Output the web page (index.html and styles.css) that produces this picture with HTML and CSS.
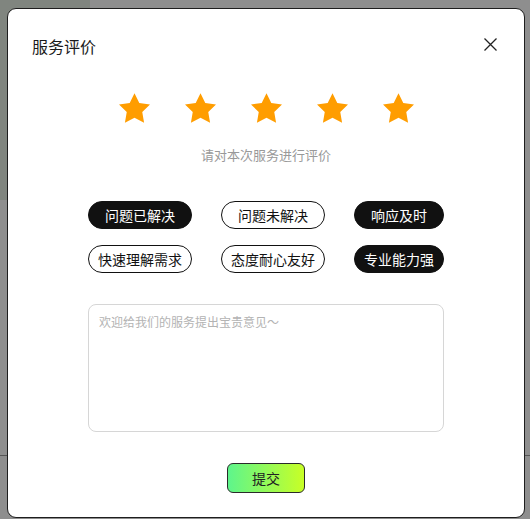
FILE: index.html
```html
<!DOCTYPE html>
<html lang="zh">
<head>
<meta charset="utf-8">
<title>服务评价</title>
<link rel="stylesheet" href="styles.css">
</head>
<body>
<div class="backdrop">
  <div class="side"></div>
  <div class="line"></div>
  <div class="modal">
    <div class="header">
      <h2 class="title">服务评价</h2>
      <svg class="close" width="13" height="13" viewBox="0 0 13 13"><path d="M0.5 0.5 L12.5 12.5 M12.5 0.5 L0.5 12.5" stroke="#222" stroke-width="1.3" fill="none"/></svg>
    </div>
    <div class="stars">
      <svg class="star" viewBox="2 2 20 19.1"><polygon points="12,2 15.09,8.26 22,9.27 17,14.14 18.18,21.02 12,17.77 5.82,21.02 7,14.14 2,9.27 8.91,8.26"/></svg>
      <svg class="star" viewBox="2 2 20 19.1"><polygon points="12,2 15.09,8.26 22,9.27 17,14.14 18.18,21.02 12,17.77 5.82,21.02 7,14.14 2,9.27 8.91,8.26"/></svg>
      <svg class="star" viewBox="2 2 20 19.1"><polygon points="12,2 15.09,8.26 22,9.27 17,14.14 18.18,21.02 12,17.77 5.82,21.02 7,14.14 2,9.27 8.91,8.26"/></svg>
      <svg class="star" viewBox="2 2 20 19.1"><polygon points="12,2 15.09,8.26 22,9.27 17,14.14 18.18,21.02 12,17.77 5.82,21.02 7,14.14 2,9.27 8.91,8.26"/></svg>
      <svg class="star" viewBox="2 2 20 19.1"><polygon points="12,2 15.09,8.26 22,9.27 17,14.14 18.18,21.02 12,17.77 5.82,21.02 7,14.14 2,9.27 8.91,8.26"/></svg>
    </div>
    <p class="hint">请对本次服务进行评价</p>
    <div class="tags">
      <span class="tag on">问题已解决</span>
      <span class="tag">问题未解决</span>
      <span class="tag on">响应及时</span>
      <span class="tag">快速理解需求</span>
      <span class="tag">态度耐心友好</span>
      <span class="tag on">专业能力强</span>
    </div>
    <textarea class="comment" placeholder="欢迎给我们的服务提出宝贵意见～"></textarea>
    <div class="actions">
      <button class="submit">提交</button>
    </div>
  </div>
</div>
</body>
</html>
```

FILE: styles.css
```css
* { box-sizing: border-box; }
html, body {
  margin: 0;
  padding: 0;
  width: 530px;
  height: 519px;
  overflow: hidden;
  background: #8e8e8e;
  font-family: "Noto Sans CJK SC", "Noto Sans", sans-serif;
}
.backdrop {
  position: relative;
  width: 530px;
  height: 519px;
  padding: 8px 0 0 7px;
}
.side {
  position: absolute;
  left: 0;
  top: 0;
  width: 90px;
  height: 200px;
  background: #80857f;
}
.line {
  position: absolute;
  left: 0;
  right: 0;
  top: 455px;
  height: 1px;
  background: #555;
}
.modal {
  position: relative;
  width: 518px;
  height: 510px;
  background: #fff;
  border: 1px solid #1e1e1e;
  border-radius: 9px;
  padding: 25px 27px 0 24px;
  display: flex;
  flex-direction: column;
  align-items: center;
}
.header {
  width: 100%;
  display: flex;
  justify-content: space-between;
  align-items: center;
  height: 24px;
}
.title {
  margin: 0;
  font-size: 16px;
  font-weight: 400;
  color: #1a1a1a;
  line-height: 24px;
}
.close { display: block; margin-top: -4px; }
.stars {
  margin-top: 35px;
  display: flex;
  gap: 35px;
  margin-left: 3px;
}
.star {
  width: 31px;
  height: 30px;
  display: block;
  fill: #ff9d00;
}
.hint {
  margin: 23px 0 0 3px;
  font-size: 13px;
  line-height: 18px;
  color: #999;
}
.tags {
  margin-top: 37px;
  width: 356px;
  margin-left: 3px;
  display: grid;
  grid-template-columns: auto auto auto;
  justify-content: space-between;
  row-gap: 16px;
}
.tag {
  height: 28px;
  padding: 0 9px;
  border: 1px solid #111;
  border-radius: 14px;
  font-size: 14px;
  line-height: 26px;
  color: #111;
  text-align: center;
  white-space: nowrap;
  background: #fff;
}
.tag.on {
  background: #111;
  color: #fff;
}
.comment {
  margin-top: 31px;
  margin-left: 3px;
  width: 356px;
  height: 128px;
  border: 1px solid #d6d6d6;
  border-radius: 8px;
  padding: 8px 10px;
  font-family: "Noto Sans CJK SC", "Noto Sans", sans-serif;
  font-size: 12px;
  line-height: 18px;
  resize: none;
  outline: none;
  color: #333;
}
.comment::placeholder { color: #b3b3b3; }
.actions {
  margin-top: 31px;
  margin-left: 3px;
}
.submit {
  width: 78px;
  height: 30px;
  border: 1px solid #2a2a2a;
  border-radius: 6px;
  background: linear-gradient(90deg, #5ef58c, #c8ff26);
  font-family: "Noto Sans CJK SC", "Noto Sans", sans-serif;
  font-size: 14px;
  color: #222;
  padding: 0;
  cursor: pointer;
}
```
